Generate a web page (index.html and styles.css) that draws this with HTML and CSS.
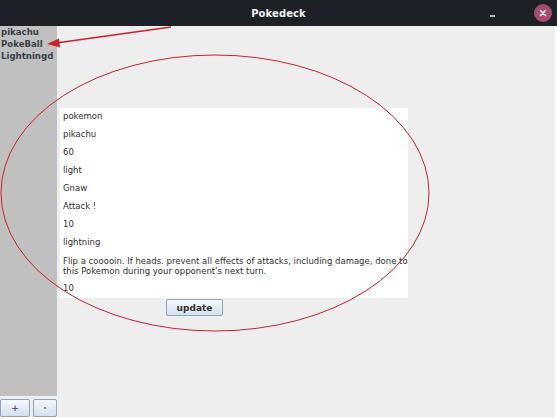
FILE: index.html
```html
<!DOCTYPE html>
<html>
<head>
<meta charset="utf-8">
<link rel="stylesheet" href="styles.css">
</head>
<body>
<div class="window">
  <header class="titlebar">
    <span class="title">Pokedeck</span>
    <span class="minimize"></span>
    <span class="close">
      <svg width="8" height="8" viewBox="0 0 8 8"><path d="M1.5 1.5 L6.5 6.5 M6.5 1.5 L1.5 6.5" stroke="#fff" stroke-width="1.6" stroke-linecap="round"/></svg>
    </span>
  </header>
  <div class="main">
    <aside class="left">
      <ul class="list">
        <li>pikachu</li>
        <li>PokeBall</li>
        <li>Lightningd</li>
      </ul>
      <div class="buttons">
        <button class="small plus">+</button>
        <button class="small minus">-</button>
      </div>
    </aside>
    <section class="content">
      <div class="panel">
        <div class="row">pokemon</div>
        <div class="row">pikachu</div>
        <div class="row">60</div>
        <div class="row">light</div>
        <div class="row">Gnaw</div>
        <div class="row">Attack !</div>
        <div class="row">10</div>
        <div class="row">lightning</div>
        <div class="para">Flip a cooooin. If heads. prevent all effects of attacks, including damage, done to this Pokemon during your opponent's next turn.</div>
        <div class="row last">10</div>
      </div>
      <button class="update">update</button>
    </section>
  </div>
  <svg class="annot" width="557" height="419" viewBox="0 0 557 419">
    <ellipse cx="215" cy="193" rx="214" ry="138" fill="none" stroke="#d0202a" stroke-width="1"/>
    <line x1="171" y1="27" x2="56" y2="43" stroke="#d0202a" stroke-width="1.3"/>
    <polygon points="47,44 59,38.5 60,47.5" fill="#d0202a"/>
  </svg>
</div>
</body>
</html>
```
FILE: styles.css
```css
* { box-sizing: border-box; }
html, body { margin: 0; padding: 0; }
body {
  width: 557px;
  height: 419px;
  background: #ffffff;
  font-family: "DejaVu Sans", sans-serif;
  overflow: hidden;
}
.window {
  position: relative;
  width: 557px;
  height: 419px;
  display: flex;
  flex-direction: column;
}
.titlebar {
  height: 26px;
  background: #1e2027;
  display: flex;
  align-items: center;
  justify-content: center;
  position: relative;
  flex: none;
}
.title {
  color: #f2f2f2;
  font-weight: bold;
  font-size: 10px;
  letter-spacing: 0.1px;
}
.minimize {
  position: absolute;
  left: 490px;
  top: 15px;
  width: 5px;
  height: 1.5px;
  background: #b8b8b8;
}
.close {
  position: absolute;
  left: 534px;
  top: 4px;
  width: 18px;
  height: 18px;
  border-radius: 50%;
  background: #a8496e;
  display: flex;
  align-items: center;
  justify-content: center;
}
.main {
  display: flex;
  width: 555px;
  height: 391px;
  background: #eeeeee;
}
.left {
  width: 57px;
  display: flex;
  flex-direction: column;
}
.list {
  list-style: none;
  margin: 0;
  padding: 0 0 0 1px;
  background: #c0c0c0;
  height: 370px;
  width: 57px;
}
.list li {
  font-weight: bold;
  font-size: 8.6px;
  color: #3a404a;
  line-height: 12px;
}
.buttons {
  display: flex;
  gap: 3px;
  margin-top: 3px;
}
.small {
  height: 18px;
  margin: 0;
  padding: 0;
  border: 1px solid #8fa3b8;
  border-radius: 2px;
  background: linear-gradient(#f4f8fb, #d3e0ec);
  font-family: "DejaVu Sans", sans-serif;
  font-weight: bold;
  font-size: 9px;
  color: #333;
}
.plus { width: 30px; color: #6a3fa0; }
.minus { width: 24px; font-size: 7px; }
.content {
  flex: 1;
  display: flex;
  flex-direction: column;
  align-items: flex-start;
  padding: 82px 0 0 3px;
}
.panel {
  width: 348px;
  height: 190px;
  background: #ffffff;
  padding: 0 0 0 3px;
  font-size: 8.5px;
  color: #333;
}
.row {
  height: 18px;
  line-height: 16px;
}
.row.last {
  line-height: 17px;
}
.para {
  padding-top: 4px;
  line-height: 10px;
  height: 28px;
}
.update {
  margin: 1px 0 0 106px;
  width: 57px;
  height: 17px;
  padding: 0;
  border: 1px solid #8fa3b8;
  border-radius: 2px;
  background: linear-gradient(#f4f8fb, #d3e0ec);
  font-family: "DejaVu Sans", sans-serif;
  font-weight: bold;
  font-size: 9px;
  color: #333;
}
.annot {
  position: absolute;
  left: 0;
  top: 0;
  pointer-events: none;
}
```
